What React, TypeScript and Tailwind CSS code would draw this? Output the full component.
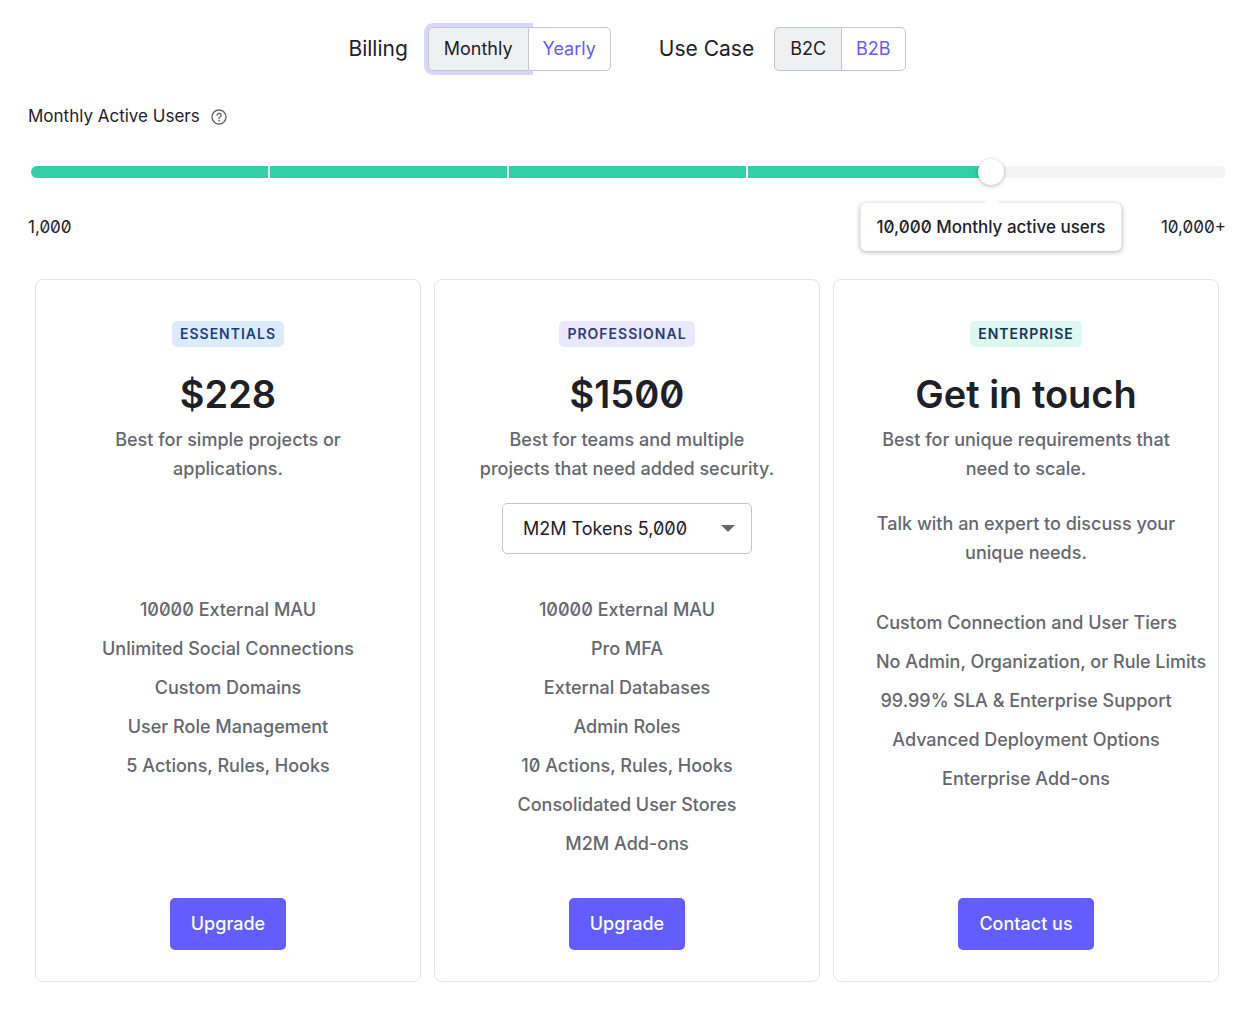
import React from 'react';

interface Plan {
  name: string;
  badge: string;
  price: string;
  description: string;
  tokens?: string[];
  note?: string;
  features: string[];
  action: string;
}

const plans: Plan[] = [
  {
    name: 'Essentials',
    badge: 'bg-[#dbebfd] text-[#1b3f7d]',
    price: '$228',
    description: 'Best for simple projects or applications.',
    features: [
      '10000 External MAU',
      'Unlimited Social Connections',
      'Custom Domains',
      'User Role Management',
      '5 Actions, Rules, Hooks',
    ],
    action: 'Upgrade',
  },
  {
    name: 'Professional',
    badge: 'bg-[#e9e8ff] text-[#2a3d70]',
    price: '$1500',
    description: 'Best for teams and multiple projects that need added security.',
    tokens: ['5,000', '10,000'],
    features: [
      '10000 External MAU',
      'Pro MFA',
      'External Databases',
      'Admin Roles',
      '10 Actions, Rules, Hooks',
      'Consolidated User Stores',
      'M2M Add-ons',
    ],
    action: 'Upgrade',
  },
  {
    name: 'Enterprise',
    badge: 'bg-[#def7f0] text-[#133558]',
    price: 'Get in touch',
    description: 'Best for unique requirements that need to scale.',
    note: 'Talk with an expert to discuss your unique needs.',
    features: [
      'Custom Connection and User Tiers',
      'No Admin, Organization, or Rule Limits',
      '99.99% SLA & Enterprise Support',
      'Advanced Deployment Options',
      'Enterprise Add-ons',
    ],
    action: 'Contact us',
  },
];

interface ToggleProps {
  label: string;
  options: string[];
  highlighted?: boolean;
}

const Toggle: React.FC<ToggleProps> = ({ label, options, highlighted }) => {
  const [selected, setSelected] = React.useState(options[0]);

  return (
    <div role="group" aria-label={label} className="flex items-center gap-5">
      <span className="text-[21px] text-[#1e212a]">{label}</span>
      <div className="flex h-11">
        {options.map(option => (
          <button
            key={option}
            type="button"
            aria-pressed={selected === option}
            onClick={() => setSelected(option)}
            className={`relative border border-[#c4c6cb] px-[15px] text-lg first:rounded-l-[5px] last:-ml-px last:rounded-r-[5px] last:px-[14px] ${
              selected === option ? 'bg-[#eff0f2] text-[#1e212a]' : 'bg-white text-[#635dff]'
            } ${highlighted && selected === option ? 'ring-4 ring-[#d8d5fe]' : ''}`}
          >
            {option}
          </button>
        ))}
      </div>
    </div>
  );
};

const UsersSlider: React.FC = () => {
  const [level, setLevel] = React.useState(241);
  const percent = (level / 300) * 100;

  return (
    <section className="mt-8">
      <div className="flex h-7 items-center gap-[10px] text-[17px] text-[#1e212a]">
        <label htmlFor="mau">Monthly Active Users</label>
        <button type="button" aria-label="About monthly active users">
          <svg viewBox="0 0 18 18" className="h-[18px] w-[18px]" fill="none" stroke="#65676e">
            <circle cx="9" cy="9" r="7" strokeWidth="1.4" />
            <path d="M7 7.3a2 2 0 1 1 3 1.7c-.7.4-1 .7-1 1.4" strokeWidth="1.3" strokeLinecap="round" />
            <circle cx="9" cy="12.6" r=".85" fill="#65676e" stroke="none" />
          </svg>
        </button>
      </div>

      <div className="relative ml-[3px] mt-[26px] flex h-[30px] items-center">
        <div className="h-3 w-full overflow-hidden rounded-full bg-[#f4f4f4]">
          <div className="relative h-full bg-[#33cfa9]" style={{ width: `${percent}%` }} />
        </div>
        <div className="absolute inset-0 grid grid-cols-5 items-center">
          {[1, 2, 3].map(tick => (
            <span key={tick} className="h-3 border-r-2 border-white" />
          ))}
        </div>
        <input
          id="mau"
          type="range"
          min={0}
          max={300}
          value={level}
          onChange={e => setLevel(Number(e.target.value))}
          className="absolute -inset-x-[13px] inset-y-0 cursor-pointer appearance-none bg-transparent [&::-webkit-slider-thumb]:h-[26px] [&::-webkit-slider-thumb]:w-[26px] [&::-webkit-slider-thumb]:appearance-none [&::-webkit-slider-thumb]:rounded-full [&::-webkit-slider-thumb]:bg-white [&::-webkit-slider-thumb]:shadow-[0_1px_4px_rgba(0,0,0,0.3)]"
        />
        <div
          className="absolute top-[46px] -translate-x-1/2 whitespace-nowrap rounded-md bg-white px-4 py-[10px] text-[17px] leading-7 font-medium text-[#1e212a] shadow-[0_1px_5px_rgba(0,0,0,0.3)]"
          style={{ left: `${percent}%` }}
        >
          <svg viewBox="0 0 18 6" className="absolute -top-[5px] left-1/2 h-[6px] w-[18px] -translate-x-1/2" fill="white">
            <path d="M0 6 6 1.2Q9-1 12 1.2L18 6Z" />
          </svg>
          10,000 Monthly active users
        </div>
      </div>

      <div className="mt-[27px] flex h-7 items-center justify-between text-[17px] text-[#1e212a]">
        <span>1,000</span>
        <span>10,000+</span>
      </div>
    </section>
  );
};

const PlanCard: React.FC<{ plan: Plan }> = ({ plan }) => (
  <article className="flex min-w-0 flex-col items-center rounded-lg border border-[#e3e4e6] px-[38px] pt-[41px] pb-[31px] text-center text-lg leading-[29px] font-medium text-[#65676e]">
    <h2 className={`h-[26px] rounded-[5px] px-2 text-sm leading-[25px] font-semibold tracking-[1px] uppercase ${plan.badge}`}>
      {plan.name}
    </h2>
    <p className="mt-[23px] text-[38px] leading-[48px] font-semibold text-[#1e1f29]">{plan.price}</p>
    <p className="mt-[7px]">{plan.description}</p>

    <div className="min-h-[107px]">
      {plan.tokens && (
        <div className="relative mt-5 w-[250px]">
          <select
            aria-label="M2M Tokens"
            className="h-[51px] w-full appearance-none rounded-[5px] border border-[#c4c6cb] bg-white pl-5 text-lg font-normal text-[#1e212a]"
          >
            {plan.tokens.map(amount => (
              <option key={amount}>M2M Tokens {amount}</option>
            ))}
          </select>
          <svg viewBox="0 0 14 7" className="pointer-events-none absolute top-[22px] right-[17px] h-[7px] w-[14px]" fill="#65676e">
            <path d="M0 0h14L7 7z" />
          </svg>
        </div>
      )}
      {plan.note && <p className="mt-[26px] mb-9">{plan.note}</p>}
    </div>

    <ul className="w-full px-1 leading-[39px] whitespace-nowrap">
      {plan.features.map(feature => (
        <li key={feature}>{feature}</li>
      ))}
    </ul>

    <div className="mt-auto pt-[35px]">
      <button type="button" className="h-[52px] rounded-[5px] bg-[#635dff] px-[21px] text-lg font-medium text-white">
        {plan.action}
      </button>
    </div>
  </article>
);

const App: React.FC = () => (
  <main className="bg-white pt-[27px] pr-[34px] pb-[37px] pl-7 font-['Inter',sans-serif] slashed-zero">
    <div className="flex flex-wrap justify-center gap-12">
      <Toggle label="Billing" options={['Monthly', 'Yearly']} highlighted />
      <Toggle label="Use Case" options={['B2C', 'B2B']} />
    </div>

    <UsersSlider />

    <div className="mt-[37px] grid grid-cols-3 gap-[13px] px-[7px]">
      {plans.map(plan => (
        <PlanCard key={plan.name} plan={plan} />
      ))}
    </div>
  </main>
);

export default App;
